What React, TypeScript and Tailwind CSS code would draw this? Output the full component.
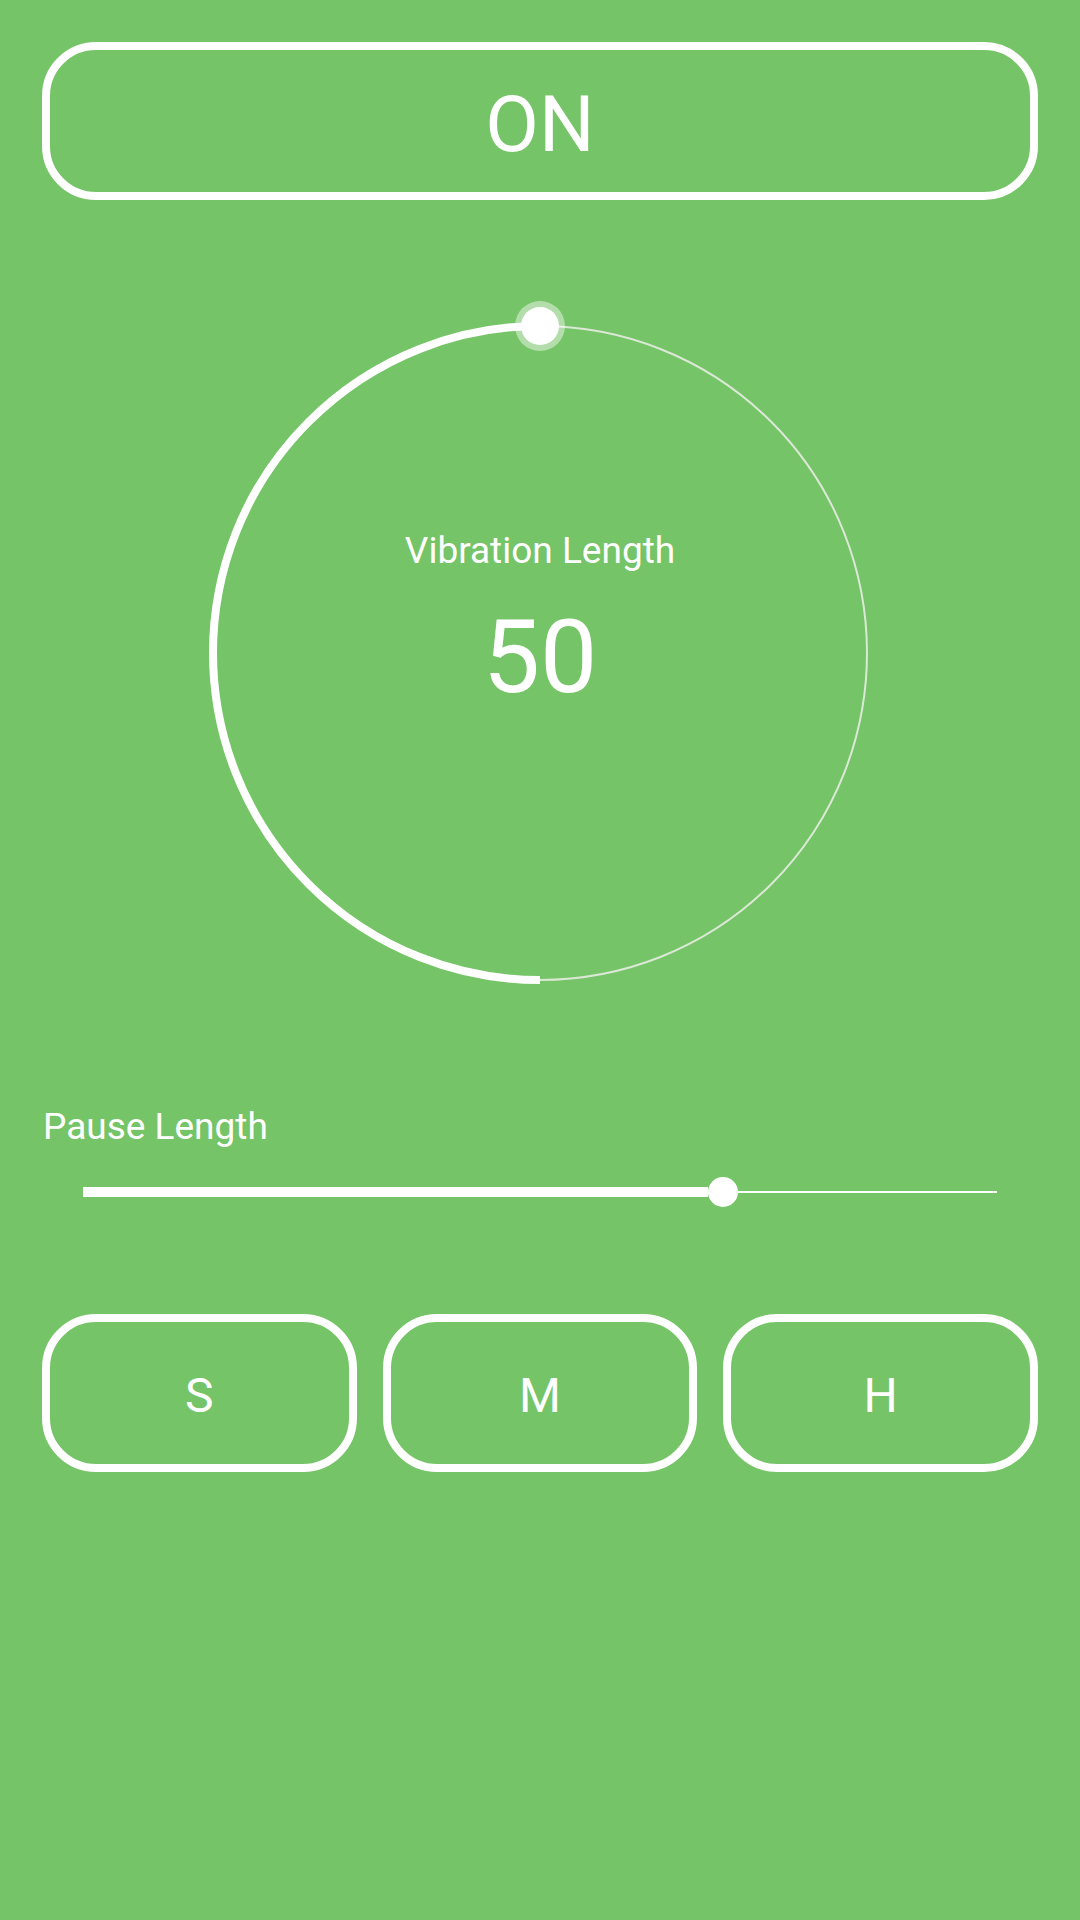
import React from "react";

export default function App() {
  return (
    <div
      className="w-[1080px] h-[1920px] bg-[#75c467] text-white flex flex-col"
      style={{ fontFamily: "Roboto, 'Noto Sans', sans-serif" }}
    >
      <div className="mx-[42px] mt-[42px] h-[158px] border-[8px] border-white rounded-[54px] flex items-center justify-center">
        <span className="pt-[8px] text-[78px] leading-none">ON</span>
      </div>

      <div className="relative mx-auto mt-[93px] w-[720px] h-[720px] flex flex-col items-center">
        <svg className="absolute inset-0" width="720" height="720" viewBox="0 0 720 720">
          <circle cx="360" cy="360" r="327" fill="none" stroke="#dbe8d6" strokeWidth="2" />
          <path d="M 360 33 A 327 327 0 0 0 360 687" fill="none" stroke="#ffffff" strokeWidth="8" />
          <circle cx="360" cy="33" r="25" fill="rgba(255,255,255,0.45)" />
          <circle cx="360" cy="33" r="19" fill="#ffffff" />
        </svg>
        <span className="relative mt-[239px] text-[37px] leading-none">Vibration Length</span>
        <span className="relative mt-[37px] text-[102px] leading-none">50</span>
      </div>

      <div className="ml-[43px] mt-[95px] text-[37px] leading-none">Pause Length</div>

      <div className="ml-[83px] mt-[32px] h-[30px] flex items-center">
        <div className="w-[625px] h-[10px] bg-white" />
        <div className="w-[30px] h-[30px] rounded-full bg-white" />
        <div className="w-[259px] h-[2px] bg-white" />
      </div>

      <div className="mx-[42px] mt-[107px] flex gap-[26px]">
        {["S", "M", "H"].map((l) => (
          <div
            key={l}
            className="flex-1 h-[158px] border-[8px] border-white rounded-[54px] flex items-center justify-center"
          >
            <span className="pt-[5px] text-[48px] leading-none">{l}</span>
          </div>
        ))}
      </div>
    </div>
  );
}
